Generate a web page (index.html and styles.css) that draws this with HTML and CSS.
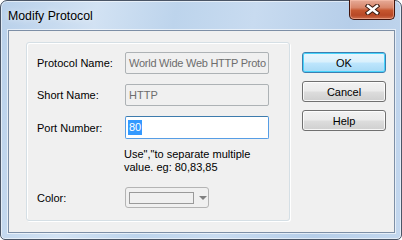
FILE: index.html
```html
<!DOCTYPE html>
<html>
<head>
<meta charset="utf-8">
<link rel="stylesheet" href="styles.css">
</head>
<body>
<div class="window">
  <div class="titlebar">
    <span class="title">Modify Protocol</span>
    <div class="close">
      <svg width="15" height="11" viewBox="0 0 15 11">
        <path d="M3 2 L12 9 M12 2 L3 9" stroke="#3a1a10" stroke-width="4.6" stroke-linecap="square" fill="none"/>
        <path d="M3 2 L12 9 M12 2 L3 9" stroke="#ffffff" stroke-width="2.6" stroke-linecap="square" fill="none"/>
      </svg>
    </div>
  </div>
  <div class="client">
    <div class="group">
      <div class="row">
        <span class="label">Protocol Name:</span>
        <div class="field disabled"><span class="val tight">World Wide Web HTTP Proto</span></div>
      </div>
      <div class="row gap">
        <span class="label">Short Name:</span>
        <div class="field disabled"><span class="val">HTTP</span></div>
      </div>
      <div class="row gap">
        <span class="label">Port Number:</span>
        <div class="field focused"><span class="sel">80</span></div>
      </div>
      <div class="hint">Use","to separate multiple<br>value. eg: 80,83,85</div>
      <div class="row color-row">
        <span class="label">Color:</span>
        <div class="combo">
          <div class="swatch"></div>
          <div class="arrow"></div>
        </div>
      </div>
    </div>
    <div class="buttons">
      <div class="btn default">OK</div>
      <div class="btn">Cancel</div>
      <div class="btn">Help</div>
    </div>
  </div>
</div>
</body>
</html>
```

FILE: styles.css
```css
html, body {
  margin: 0;
  padding: 0;
  background: #ffffff;
}
body {
  width: 402px;
  height: 240px;
  font-family: "Liberation Sans", Arial, sans-serif;
  font-size: 11px;
  color: #000;
}
.window {
  box-sizing: border-box;
  width: 402px;
  height: 240px;
  border: 1px solid #4a5566;
  border-radius: 7px 7px 5px 5px;
  background: linear-gradient(100deg, #b8d0ea 0%, #d2e2f3 22%, #bdd4ec 40%, #c8dbf0 58%, #b6cee9 80%, #c3d7ee 100%);
  box-shadow: inset 0 0 0 1px rgba(255,255,255,0.55);
  display: flex;
  flex-direction: column;
  padding: 0 6px 6px 7px;
}
.titlebar {
  height: 29px;
  display: flex;
  justify-content: space-between;
  align-items: flex-start;
}
.title {
  font-size: 12.3px;
  margin-top: 8px;
  color: #000;
  text-shadow: 0 0 6px rgba(255,255,255,0.9);
}
.close {
  box-sizing: border-box;
  width: 46px;
  height: 20px;
  margin-top: -1px;
  border: 1px solid #40140c;
  border-top: none;
  border-radius: 0 0 5px 5px;
  background: linear-gradient(#e6ab98 0%, #d8866a 40%, #c5562f 55%, #b84826 80%, #cc6d4c 100%);
  box-shadow: inset 0 0 0 1px rgba(255,200,180,0.5);
  display: flex;
  align-items: center;
  justify-content: center;
}
.client {
  flex: 1;
  background: #f0f0f0;
  border: 1px solid #7d8fa6;
  box-shadow: 0 0 0 1px rgba(255,255,255,0.6);
  display: flex;
  gap: 12px;
  padding: 11px 0 0 17px;
}
.group {
  box-sizing: border-box;
  width: 264px;
  height: 179px;
  border: 1px solid #d5dfe5;
  border-radius: 3px;
  box-shadow: inset 1px 1px 0 #ffffff, 1px 1px 0 #ffffff;
  padding: 9px 0 0 10px;
  display: flex;
  flex-direction: column;
}
.row {
  display: flex;
  align-items: center;
}
.row.gap {
  margin-top: 10px;
}
.label {
  width: 88px;
  flex: none;
}
.field {
  box-sizing: border-box;
  width: 144px;
  height: 22px;
  border: 1px solid #adb2b5;
  border-radius: 2px;
  display: flex;
  align-items: center;
  overflow: hidden;
  white-space: nowrap;
}
.field.disabled {
  background: #f0f0f0;
  color: #6d6d6d;
}
.val {
  padding-left: 3px;
}
.val.tight {
  letter-spacing: -0.25px;
}
.field.focused {
  background: #ffffff;
  border-color: #569de5;
  border-top-color: #3d7bad;
  height: 23px;
}
.sel {
  margin-left: 2px;
  background: #3399ff;
  color: #ffffff;
  padding: 1px 1px;
  line-height: 13px;
}
.hint {
  margin-top: 9px;
  padding-left: 87px;
  line-height: 13px;
}
.color-row {
  margin-top: 13px;
}
.combo {
  box-sizing: border-box;
  width: 84px;
  height: 21px;
  border: 1px solid #b4b4b4;
  border-radius: 3px;
  background: #f0f0f0;
  display: flex;
  align-items: center;
  padding-left: 3px;
}
.swatch {
  box-sizing: border-box;
  width: 65px;
  height: 12px;
  border: 1px solid #9a9a9a;
  background: #f0f0f0;
}
.arrow {
  margin-left: 5px;
  width: 0;
  height: 0;
  border-left: 4px solid transparent;
  border-right: 4px solid transparent;
  border-top: 4px solid #808080;
}
.buttons {
  display: flex;
  flex-direction: column;
  gap: 8px;
  margin-top: 10px;
}
.btn {
  box-sizing: border-box;
  width: 84px;
  height: 21px;
  border: 1px solid #707070;
  border-radius: 3px;
  background: linear-gradient(#f2f2f2 0%, #ebebeb 48%, #dddddd 52%, #cfcfcf 100%);
  box-shadow: inset 0 0 0 1px rgba(255,255,255,0.8);
  display: flex;
  align-items: center;
  justify-content: center;
}
.btn.default {
  border-color: #3c7fb1;
  background: linear-gradient(#eaf6fd 0%, #d9f0fc 48%, #bee6fd 52%, #a7d9f5 100%);
  box-shadow: inset 0 0 0 1px #48d4fb;
}
```
